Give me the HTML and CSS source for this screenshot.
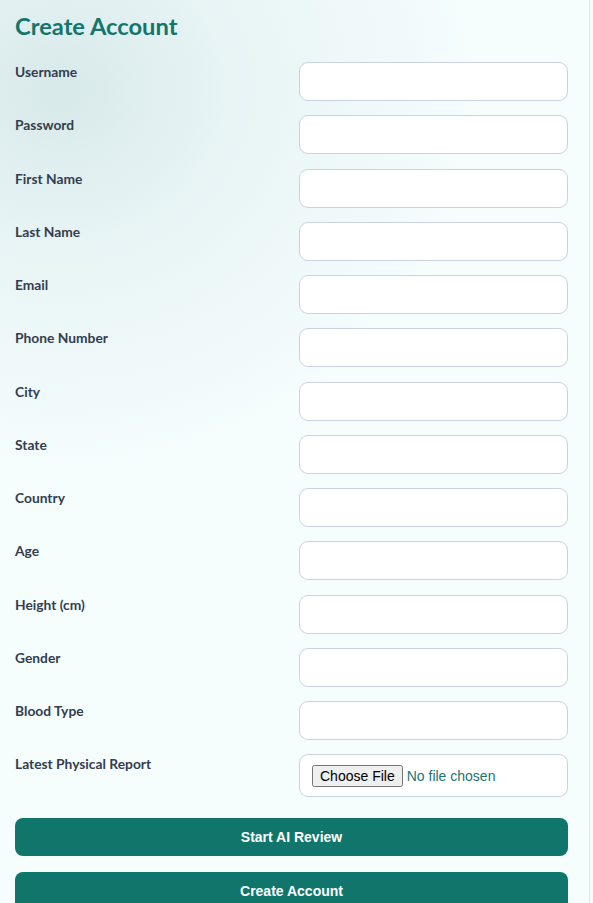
FILE: index.html
```html
<!DOCTYPE html>
<html lang="en">
<head>
<meta charset="utf-8">
<title>Create Account</title>
<link rel="stylesheet" href="styles.css">
</head>
<body>
<div class="page">
  <h1 class="title">Create Account</h1>
  <form class="form">
    <label class="label">Username</label><input class="field" type="text">
    <label class="label">Password</label><input class="field" type="password">
    <label class="label">First Name</label><input class="field" type="text">
    <label class="label">Last Name</label><input class="field" type="text">
    <label class="label">Email</label><input class="field" type="email">
    <label class="label">Phone Number</label><input class="field" type="text">
    <label class="label">City</label><input class="field" type="text">
    <label class="label">State</label><input class="field" type="text">
    <label class="label">Country</label><input class="field" type="text">
    <label class="label">Age</label><input class="field" type="text">
    <label class="label">Height (cm)</label><input class="field" type="text">
    <label class="label">Gender</label><input class="field" type="text">
    <label class="label">Blood Type</label><input class="field" type="text">
    <label class="label">Latest Physical Report</label>
    <div class="field file-field"><input class="file" type="file"></div>
    <div class="actions">
      <button type="button" class="btn">Start AI Review</button>
      <button type="button" class="btn">Create Account</button>
    </div>
  </form>
</div>
</body>
</html>
```
FILE: styles.css
```css
html, body {
  margin: 0;
  padding: 0;
  height: 100%;
}
body {
  background: #f5fdfd;
  overflow: hidden;
}
.page {
  box-sizing: border-box;
  width: 590px;
  min-height: 903px;
  padding: 12px 21px 0 15px;
  border-right: 1px solid #dbe8e8;
  background:
    radial-gradient(ellipse 420px 380px at 60px 90px, rgba(214, 232, 233, 0.95) 0%, rgba(226, 240, 241, 0.7) 40%, rgba(245, 253, 253, 0) 100%),
    #f5fdfd;
  font-family: Lato, "Noto Sans", sans-serif;
}
.title {
  margin: 0 0 22px 0;
  font-size: 23.7px;
  font-weight: 700;
  color: #12766d;
  line-height: 28px;
}
.form {
  display: grid;
  grid-template-columns: minmax(0, 1fr) minmax(0, 1fr);
  column-gap: 15px;
  row-gap: 14.25px;
}
.label {
  font-size: 13.8px;
  font-weight: 700;
  color: #333d4f;
  line-height: 18px;
  padding-top: 1px;
}
.field {
  box-sizing: border-box;
  width: 100%;
  height: 39px;
  margin: 0;
  border: 1px solid #c9d4e0;
  border-radius: 9px;
  background: #ffffff;
  font-family: "Liberation Sans", Arial, sans-serif;
  font-size: 14px;
  outline: none;
}
.file-field {
  height: 43px;
  display: flex;
  align-items: center;
  padding: 0 12px;
}
.file {
  font-family: "Liberation Sans", Arial, sans-serif;
  font-size: 14px;
  color: #1b7572;
}
.actions {
  grid-column: 1 / -1;
  display: flex;
  flex-direction: column;
  gap: 16px;
  margin-top: 6px;
}
.btn {
  height: 38px;
  border: none;
  border-radius: 8px;
  background: #10766c;
  color: #ffffff;
  font-family: "Liberation Sans", Arial, sans-serif;
  font-size: 14px;
  font-weight: 700;
}
```
